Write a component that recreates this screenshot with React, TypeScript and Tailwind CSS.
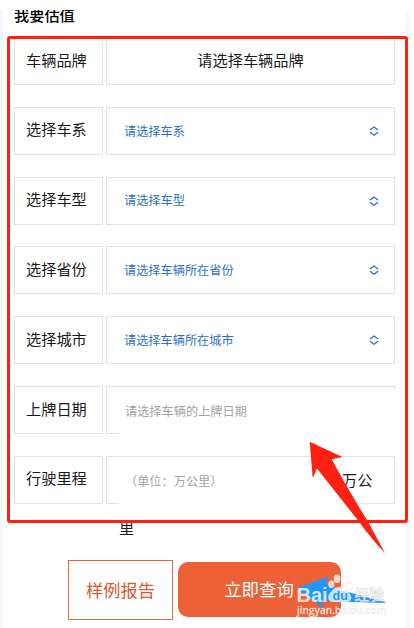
const fields = [
  { label: "选择车系", placeholder: "请选择车系" },
  { label: "选择车型", placeholder: "请选择车型" },
  { label: "选择省份", placeholder: "请选择车辆所在省份" },
  { label: "选择城市", placeholder: "请选择车辆所在城市" },
];

function Label({ text }: { text: string }) {
  return (
    <div className="flex h-[48px] w-[89px] shrink-0 items-center border border-[#e2e2e2] pb-[4px] pl-[11px] text-[15.2px] whitespace-nowrap text-[#1a1a1a]">
      {text}
    </div>
  );
}

function UpDownIcon() {
  return (
    <svg width="10" height="10" viewBox="0 0 10 10" fill="none" stroke="#2c70d6" strokeWidth="1.4">
      <path d="M1 4 5 1l4 3M1 6.2l4 3 4-3" />
    </svg>
  );
}

function RedArrow() {
  return (
    <svg className="absolute top-[440px] left-[306px]" width="82" height="116" viewBox="306 440 82 116">
      <path
        d="M309.7 441.8 342.4 457 331.7 459.3Q350 493 367 520L385 553Q373 541 357.7 520L317 468.5 312.7 478Z"
        fill="#ff2012"
      />
    </svg>
  );
}

function Watermark() {
  return (
    <svg className="absolute top-[570px] left-[290px]" width="104" height="48" viewBox="290 570 104 48">
      <path d="M296 588.5 329.5 576 325 583 340 590 385 602 385 603 321 601 324 609Z" fill="#1e98ff" />
      <g fill="#fff" fillOpacity="0.75" stroke="#c8c8c8" strokeOpacity="0.5" strokeWidth="0.6">
        <ellipse cx="331.3" cy="584.3" rx="3" ry="3.8" />
        <ellipse cx="337" cy="578.7" rx="3.2" ry="4.2" />
        <ellipse cx="345" cy="579.3" rx="3.6" ry="4.5" />
        <ellipse cx="350" cy="586.5" rx="3.6" ry="3.8" />
        <path d="M340 587c5 0 6 3 9 6 4 5 2 9-3 9h-12c-6 0-7-5-4-9 3-3 4-6 10-6Z" />
      </g>
      <g fontFamily="Liberation Sans, Noto Sans CJK SC, sans-serif" fontWeight="700" fill="#fff" fillOpacity="0.8">
        <text x="296.5" y="601.7" fontSize="20">
          Bai
        </text>
        <text x="332.5" y="600.3" fontSize="12.5" fill="#1e98ff" fillOpacity="1">
          du
        </text>
        <text x="354.3" y="600.3" fontSize="15" stroke="#bbb" strokeWidth="0.5" strokeOpacity="0.7">
          经验
        </text>
      </g>
      <text
        x="297"
        y="613.5"
        fontSize="10.5"
        fontWeight="600"
        textLength="89"
        lengthAdjust="spacingAndGlyphs"
        fontFamily="Open Sans, sans-serif"
        fill="#fff"
        fillOpacity="0.75"
        stroke="#d4d4d4"
        strokeWidth="0.4"
        strokeOpacity="0.7"
      >
        jingyan.baidu.com
      </text>
    </svg>
  );
}

export default function App() {
  return (
    <div className="relative h-[628px] w-[414px] overflow-hidden bg-white pt-[10px] font-['Noto_Sans_CJK_SC',sans-serif]">
      <div className="flex h-[618px]">
        <div className="w-[3px] shrink-0 bg-[#f7f7f7]" />
        <main className="w-[403px] shrink-0 overflow-hidden pl-[11px]">
          <h1 className="-mt-[7px] h-[34px] text-[15.2px] leading-[22px] font-medium text-black">我要估值</h1>

          <div className="flex flex-col gap-[21.8px]">
            <div className="flex gap-[3px]">
              <Label text="车辆品牌" />
              <div className="flex h-[48px] w-[289px] items-center justify-center border border-[#e2e2e2] pb-[4px] text-[15.2px] text-[#1a1a1a]">
                请选择车辆品牌
              </div>
            </div>

            {fields.map((field) => (
              <div key={field.label} className="flex gap-[3px]">
                <Label text={field.label} />
                <div className="flex h-[48px] w-[289px] items-center justify-between border border-[#e2e2e2] pr-[15px] pl-[17px] text-[12.2px] text-[#2c70c8]">
                  <span>{field.placeholder}</span>
                  <UpDownIcon />
                </div>
              </div>
            ))}

            {/* the inputs are opaque and taller than their frames */}
            <div className="flex gap-[3px]">
              <Label text="上牌日期" />
              <div className="h-[48px] w-[289px] border border-[#e2e2e2] pt-[3px] pl-[12px]">
                <div className="flex h-[47px] w-[277px] items-center bg-white pb-[5px] pl-[6px] text-[12.2px] text-[#a3a3a3]">
                  请选择车辆的上牌日期
                </div>
              </div>
            </div>

            <div className="flex gap-[3px]">
              <Label text="行驶里程" />
              <div className="h-[48px] w-[289px] border border-[#e2e2e2] pl-[12px]">
                <div className="w-[257px] text-[15.2px] leading-[44px] break-all text-[#1a1a1a]">
                  <span className="inline-block h-[48px] w-[223px] bg-white pl-[6px] align-top text-[12.2px] leading-[48px] text-[#a3a3a3]">
                    （单位：万公里）
                  </span>
                  万公里
                </div>
              </div>
            </div>
          </div>

          <div className="mt-[56px] flex gap-[5px] pl-[54px]">
            <div className="flex h-[60px] w-[105px] items-center justify-center border border-[#da6a45] text-[17.2px] text-[#d9582f]">
              样例报告
            </div>
            <div className="mt-[2px] flex h-[55px] w-[163px] items-center justify-center rounded-[10px] bg-[#ec6236] pr-px text-[17.4px] text-white">
              立即查询
            </div>
          </div>
        </main>
        <div className="w-[5px] shrink-0 bg-gradient-to-r from-[#f5f5f5] to-white" />
      </div>

      <div className="absolute top-[36px] left-[7px] h-[487px] w-[401px] rounded-[3px] border-3 border-[#ff2012]" />
      <RedArrow />
      <Watermark />
    </div>
  );
}
